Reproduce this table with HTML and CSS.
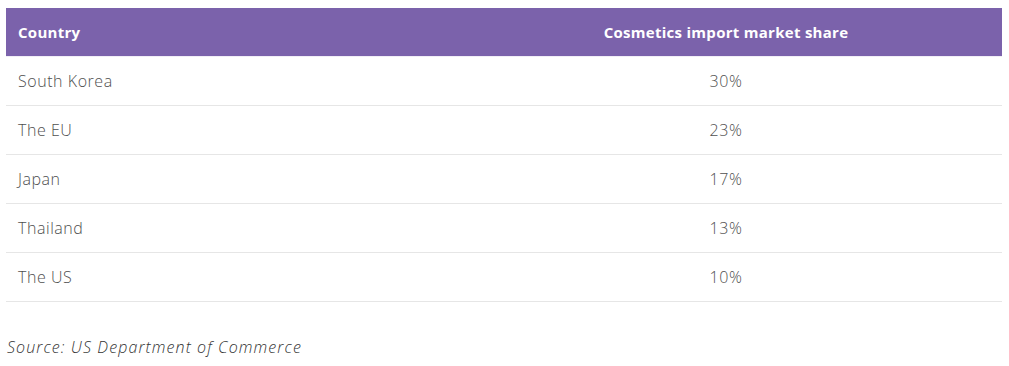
FILE: index.html
```html
<!DOCTYPE html>
<html lang="en">
<head>
<meta charset="utf-8">
<link rel="stylesheet" href="styles.css">
</head>
<body>
<div class="wrap">
  <table class="data">
    <thead>
      <tr><th class="c1">Country</th><th class="c2">Cosmetics import market share</th></tr>
    </thead>
    <tbody>
      <tr><td class="c1">South Korea</td><td class="c2">30%</td></tr>
      <tr><td class="c1">The EU</td><td class="c2">23%</td></tr>
      <tr><td class="c1">Japan</td><td class="c2">17%</td></tr>
      <tr><td class="c1">Thailand</td><td class="c2">13%</td></tr>
      <tr><td class="c1">The US</td><td class="c2">10%</td></tr>
    </tbody>
  </table>
  <p class="source">Source: US Department of Commerce</p>
</div>
</body>
</html>
```
FILE: styles.css
```css
html, body { margin: 0; padding: 0; background: #fff; }
body { font-family: "Open Sans", "Liberation Sans", sans-serif; }
.wrap { padding: 8px 7px 0 6px; }
.data { width: 996px; border-collapse: collapse; table-layout: fixed; }
.data th { background: #7b62ab; color: #fff; font-weight: 700; font-size: 15px; height: 48px; padding: 0 12px; text-align: left; letter-spacing: 0.28px; border-bottom: 1px solid #f1eef6; }
.data th.c2, .data td.c2 { text-align: center; }
.data .c1 { width: 420px; }
.data td { height: 48px; padding: 0 12px; font-size: 16px; font-weight: 300; color: #4f4f4f; border-bottom: 1px solid #e6e6e6; letter-spacing: 0.55px; }
.source { margin: 34px 0 0 1px; font-size: 16px; font-style: italic; font-weight: 300; color: #333; letter-spacing: 1.1px; }
```
